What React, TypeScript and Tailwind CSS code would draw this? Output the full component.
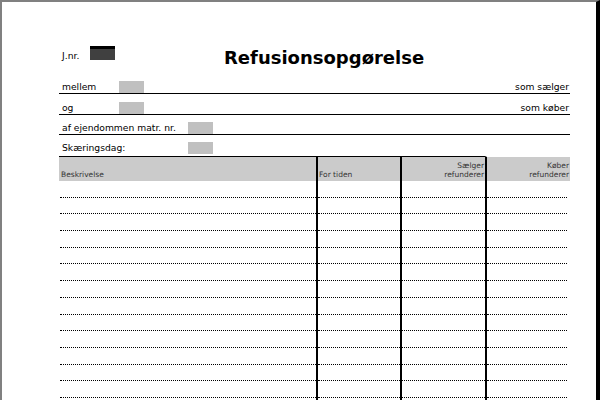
import React from 'react';

// Blank spreadsheet-style form: "Refusionsopgørelse"
const ROWS = Array.from({ length: 14 });

const FormRow: React.FC<{
  label: string;
  labelWidth: string;
  height: string;
  right?: string;
  bordered?: boolean;
  boxOffset?: string;
}> = ({ label, labelWidth, height, right, bordered = true, boxOffset = '' }) => (
  <div
    className={`flex items-end w-[511px] ${height} ${bordered ? 'border-b border-black' : ''} ${boxOffset}`}
  >
    <span className={`pl-[3px] ${labelWidth} text-[9.2px] leading-[12px] text-black whitespace-nowrap`}>
      {label}
    </span>
    <div className="w-[25px] h-[12px] bg-[#c0c0c0]" />
    {right && (
      <span className="ml-auto pr-px text-[9.2px] leading-[12px] text-black whitespace-nowrap">{right}</span>
    )}
  </div>
);

const App: React.FC = () => {
  return (
    <div className="w-[600px] h-[400px] overflow-hidden bg-white border-t-2 border-l-2 border-[#808080] border-r-4 border-r-black font-['DejaVu_Sans',sans-serif]">
      <div className="pl-[57px]">
        {/* Header: J.nr. + title */}
        <div className="flex items-start h-[18px] mt-[44px]">
          <span className="block w-[31px] pl-[3px] mt-[4px] text-[9.2px] leading-[12px] text-black">J.nr.</span>
          <div className="w-[25px] h-[14px] bg-[#404040] border-t-[3px] border-black" />
          <h1 className="ml-[109px] mt-[3px] text-[18px] leading-[18px] font-bold text-black whitespace-nowrap">
            Refusionsopgørelse
          </h1>
        </div>

        {/* Parties */}
        <div className="mt-[9px]">
          <FormRow label="mellem" labelWidth="w-[60px]" height="h-[21px]" right="som sælger" />
          <FormRow label="og" labelWidth="w-[60px]" height="h-[21px]" right="som køber" />
          <FormRow label="af ejendommen matr. nr." labelWidth="w-[129px]" height="h-[20px]" />
          <div className="flex items-end w-[511px] h-[21px] pb-[2px]">
            <span className="pl-[3px] w-[129px] text-[9.2px] leading-[12px] text-black whitespace-nowrap">
              Skæringsdag:
            </span>
            <div className="w-[25px] h-[12px] bg-[#c0c0c0]" />
          </div>
        </div>

        {/* Table */}
        <div className="grid grid-cols-[257px_84px_85px_85px] text-[7.5px] leading-[9px] text-[#333]">
          <div className="h-[25px] border-t border-black bg-[#cbcbcb] flex items-end pl-[2px] pb-[2px]">
            Beskrivelse
          </div>
          <div className="h-[25px] border-t border-black border-l-2 border-l-black bg-[#cbcbcb] flex items-end pl-px pb-[2px]">
            For tiden
          </div>
          <div className="h-[25px] border-t border-black border-l-2 border-l-black bg-[#cbcbcb] flex flex-col justify-end items-end pr-px pb-[2px]">
            <span>Sælger</span>
            <span>refunderer</span>
          </div>
          <div className="h-[25px] border-t border-white border-l-2 border-l-black bg-[#cbcbcb] flex flex-col justify-end items-end pr-px pb-[2px]">
            <span>Køber</span>
            <span>refunderer</span>
          </div>

          {ROWS.map((_, i) => (
            <React.Fragment key={i}>
              <div className="h-[16.7px]">
                <div className="h-full ml-px border-b border-dotted border-black" />
              </div>
              <div className="h-[16.7px] border-l-2 border-black">
                <div className="h-full border-b border-dotted border-black" />
              </div>
              <div className="h-[16.7px] border-l-2 border-black">
                <div className="h-full border-b border-dotted border-black" />
              </div>
              <div className="h-[16.7px] border-l-2 border-black">
                <div className="h-full mr-[3px] border-b border-dotted border-black" />
              </div>
            </React.Fragment>
          ))}
        </div>
      </div>
    </div>
  );
};

export default App;
